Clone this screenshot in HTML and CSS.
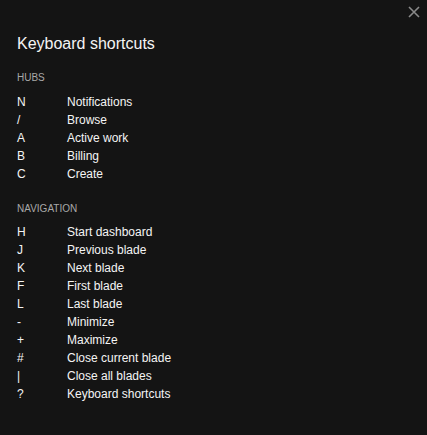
FILE: index.html
```html
<!DOCTYPE html>
<html>
<head>
<meta charset="utf-8">
<link rel="stylesheet" href="styles.css">
</head>
<body>
<div class="panel">
  <button class="close" aria-label="Close">
    <svg width="12" height="12" viewBox="0 0 12 12"><path d="M1 1L11 11M11 1L1 11" stroke="#8a8a8a" stroke-width="1.6"/></svg>
  </button>
  <h1 class="title">Keyboard shortcuts</h1>
  <h2 class="section">HUBS</h2>
  <ul class="list">
    <li class="row"><span class="key">N</span><span class="desc">Notifications</span></li>
    <li class="row"><span class="key">/</span><span class="desc">Browse</span></li>
    <li class="row"><span class="key">A</span><span class="desc">Active work</span></li>
    <li class="row"><span class="key">B</span><span class="desc">Billing</span></li>
    <li class="row"><span class="key">C</span><span class="desc">Create</span></li>
  </ul>
  <h2 class="section">NAVIGATION</h2>
  <ul class="list">
    <li class="row"><span class="key">H</span><span class="desc">Start dashboard</span></li>
    <li class="row"><span class="key">J</span><span class="desc">Previous blade</span></li>
    <li class="row"><span class="key">K</span><span class="desc">Next blade</span></li>
    <li class="row"><span class="key">F</span><span class="desc">First blade</span></li>
    <li class="row"><span class="key">L</span><span class="desc">Last blade</span></li>
    <li class="row"><span class="key">-</span><span class="desc">Minimize</span></li>
    <li class="row"><span class="key">+</span><span class="desc">Maximize</span></li>
    <li class="row"><span class="key">#</span><span class="desc">Close current blade</span></li>
    <li class="row"><span class="key">|</span><span class="desc">Close all blades</span></li>
    <li class="row"><span class="key">?</span><span class="desc">Keyboard shortcuts</span></li>
  </ul>
</div>
</body>
</html>
```
FILE: styles.css
```css
html, body {
  margin: 0;
  padding: 0;
  background: #141414;
}
body {
  font-family: "Liberation Sans", Arial, sans-serif;
  color: #f4f4f4;
}
.panel {
  position: relative;
  width: 427px;
  height: 435px;
  box-sizing: border-box;
  padding: 34px 17px 0 17px;
}
.close {
  position: absolute;
  top: 5px;
  right: 4px;
  width: 18px;
  height: 14px;
  padding: 0;
  border: 0;
  background: transparent;
  display: flex;
  align-items: center;
  justify-content: center;
}
.title {
  margin: 0;
  font-size: 16px;
  font-weight: normal;
  line-height: 20px;
  color: #f4f4f4;
}
.section {
  margin: 18px 0 9px 0;
  font-size: 10px;
  font-weight: normal;
  line-height: 12px;
  color: #a8a8a8;
}
.list {
  list-style: none;
  margin: 0;
  padding: 0;
}
.list + .section {
  margin-top: 20px;
  margin-bottom: 8px;
}
.row {
  display: flex;
  height: 18px;
  align-items: center;
  font-size: 12px;
}
.key {
  width: 50px;
  flex: none;
}
.desc {
  flex: 1;
}
```
